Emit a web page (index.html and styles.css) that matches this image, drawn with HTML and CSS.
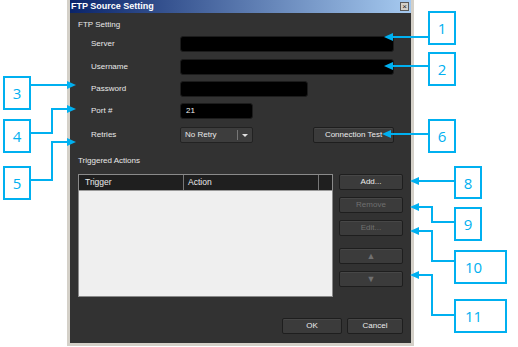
FILE: index.html
```html
<!DOCTYPE html>
<html lang="en">
<head>
    <meta charset="UTF-8">
    <title>FTP Source Setting</title>
    <link rel="stylesheet" href="styles.css">
</head>
<body>
    <div class="dialog">
        <div class="titlebar">
            <span class="title">FTP Source Setting</span>
            <span class="close">×</span>
        </div>

        <div class="content">
            <div class="group-label">FTP Setting</div>

            <div class="form">
                <label>Server</label>
                <div class="field field-wide"></div>

                <label>Username</label>
                <div class="field field-wide"></div>

                <label>Password</label>
                <div class="field field-mid"></div>

                <label>Port #</label>
                <div class="field field-short">21</div>

                <label>Retries</label>
                <div class="retry-row">
                    <div class="select">
                        <span class="select-text">No Retry</span>
                        <span class="select-arrow"></span>
                    </div>
                    <button class="btn btn-test">Connection Test</button>
                </div>
            </div>

            <div class="group-label group-triggered">Triggered Actions</div>

            <div class="actions">
                <div class="table">
                    <div class="thead">
                        <div class="th th-trigger">Trigger</div>
                        <div class="th th-action">Action</div>
                        <div class="th th-pad"></div>
                    </div>
                    <div class="tbody"></div>
                </div>
                <div class="side-buttons">
                    <button class="btn">Add...</button>
                    <button class="btn disabled">Remove</button>
                    <button class="btn disabled">Edit...</button>
                    <button class="btn disabled btn-move spaced">▲</button>
                    <button class="btn disabled btn-move">▼</button>
                </div>
            </div>

            <div class="footer">
                <button class="btn btn-ok">OK</button>
                <button class="btn btn-cancel">Cancel</button>
            </div>
        </div>
    </div>

    <!-- callout arrows -->
    <svg class="callouts" width="518" height="347" viewBox="0 0 518 347">
        <g fill="none" stroke="#00b0f0" stroke-width="2">
            <path d="M428 37 H392"/>
            <path d="M428 66 H392"/>
            <path d="M428 134 H390"/>
            <path d="M454 181 H418"/>
            <path d="M454 222 H432 V207 H418"/>
            <path d="M454 261 H432 V231 H418"/>
            <path d="M454 315 H432 V275 H418"/>
            <path d="M30 85 H68"/>
            <path d="M30 133 H52 V109 H68"/>
            <path d="M30 180 H52 V142 H68"/>
        </g>
        <g fill="#00b0f0">
            <polygon points="384,37 393,33 393,41"/>
            <polygon points="384,66 393,62 393,70"/>
            <polygon points="382,134 391,130 391,138"/>
            <polygon points="410,181 419,177 419,185"/>
            <polygon points="410,207 419,203 419,211"/>
            <polygon points="410,231 419,227 419,235"/>
            <polygon points="410,275 419,271 419,279"/>
            <polygon points="76,85 67,81 67,89"/>
            <polygon points="76,109 67,105 67,113"/>
            <polygon points="76,142 67,138 67,146"/>
        </g>
    </svg>

    <div class="tag tag-1">1</div>
    <div class="tag tag-2">2</div>
    <div class="tag tag-3">3</div>
    <div class="tag tag-4">4</div>
    <div class="tag tag-5">5</div>
    <div class="tag tag-6">6</div>
    <div class="tag tag-8">8</div>
    <div class="tag tag-9">9</div>
    <div class="tag tag-wide tag-10">10</div>
    <div class="tag tag-wide tag-11">11</div>
</body>
</html>
```

FILE: styles.css
```css
body {
    margin: 0;
    width: 518px;
    height: 347px;
    background: #fff;
    position: relative;
    overflow: hidden;
    font-family: "Liberation Sans", Arial, sans-serif;
}

.dialog {
    box-sizing: border-box;
    margin-left: 67px;
    width: 347px;
    height: 346px;
    border: 3px solid #d4d0c8;
    border-top: 0;
    box-shadow: inset 1px 0 0 #9a9a9a, inset -1px -1px 0 #9a9a9a;
    display: flex;
    flex-direction: column;
}

.titlebar {
    height: 13px;
    background: linear-gradient(to right, #0a246a, #a6caf0);
    display: flex;
    align-items: center;
    justify-content: space-between;
    padding: 0 2px 0 1px;
}

.title {
    color: #fff;
    font-weight: bold;
    font-size: 9px;
    line-height: 13px;
}

.close {
    width: 7px;
    height: 7px;
    background: #d4d0c8;
    border: 1px solid #5a5a5a;
    color: #222;
    font-size: 8px;
    line-height: 7px;
    text-align: center;
}

.content {
    flex: 1;
    background: #323232;
    padding: 0 8px;
    display: flex;
    flex-direction: column;
    color: #e9e9e9;
    font-size: 8px;
}

.group-label {
    line-height: 12px;
    margin-top: 6px;
    margin-bottom: 5px;
}

.group-triggered {
    margin-top: 12px;
    margin-bottom: 7px;
}

.form {
    display: grid;
    grid-template-columns: 89px 214px;
    grid-template-rows: 23px 22px 22px 24px 16px;
    padding-left: 13px;
    align-items: start;
}

.form label {
    line-height: 16px;
}

.field {
    height: 16px;
    box-sizing: border-box;
    background: #000;
    border: 1px solid #1c1c1c;
    border-radius: 3px;
    padding-left: 5px;
    line-height: 14px;
    color: #f0f0f0;
}

.field-wide { width: 214px; }
.field-mid { width: 128px; }
.field-short { width: 73px; }

.retry-row {
    display: flex;
    justify-content: space-between;
    height: 16px;
}

.select {
    width: 73px;
    height: 16px;
    box-sizing: border-box;
    background: #3d3d3d;
    border: 1px solid #222;
    border-radius: 2px;
    display: flex;
}

.select-text {
    flex: 1;
    padding-left: 4px;
    border-right: 1px solid #777;
    margin: 2px 0;
    line-height: 10px;
}

.select-arrow {
    width: 14px;
    position: relative;
}

.select-arrow::after {
    content: "";
    position: absolute;
    left: 4px;
    top: 6px;
    border-left: 3px solid transparent;
    border-right: 3px solid transparent;
    border-top: 3px solid #e0e0e0;
}

.btn {
    height: 16px;
    box-sizing: border-box;
    background: #3b3b3b;
    border: 1px solid #1e1e1e;
    border-radius: 2px;
    box-shadow: inset 0 1px 0 #474747;
    color: #ececec;
    font-family: "Liberation Sans", Arial, sans-serif;
    font-size: 8px;
    line-height: 14px;
    padding: 0;
    text-align: center;
}

.btn.disabled {
    color: #707070;
}

.btn-test { width: 81px; }

.actions {
    display: flex;
    gap: 6px;
    height: 123px;
}

.table {
    width: 255px;
    box-sizing: border-box;
    border: 1px solid #8a8a8a;
    display: flex;
    flex-direction: column;
}

.thead {
    height: 15px;
    background: #1f1f1f;
    display: flex;
    border-bottom: 1px solid #9a9a9a;
}

.th {
    line-height: 15px;
    padding-left: 6px;
    color: #ececec;
    font-size: 8.5px;
}

.th-trigger {
    width: 98px;
    border-right: 1px solid #777;
}

.th-action {
    flex: 1;
    padding-left: 4px;
    border-right: 1px solid #777;
}

.th-pad {
    width: 13px;
    padding: 0;
}

.tbody {
    flex: 1;
    background: #efefef;
}

.side-buttons {
    width: 64px;
    display: flex;
    flex-direction: column;
    gap: 7px;
}

.btn-move {
    font-size: 9px;
}

.spaced {
    margin-top: 5px;
}

.footer {
    margin-top: 21px;
    display: flex;
    justify-content: flex-end;
    gap: 5px;
}

.btn-ok { width: 60px; }
.btn-cancel { width: 56px; }

/* callouts */
.callouts {
    position: absolute;
    left: 0;
    top: 0;
    pointer-events: none;
}

.tag {
    position: absolute;
    box-sizing: border-box;
    width: 28px;
    height: 34px;
    border: 2px solid #00b0f0;
    background: #fff;
    color: #00b0f0;
    font-family: "Open Sans", sans-serif;
    font-size: 15px;
    line-height: 30px;
    text-align: center;
}

.tag-wide {
    width: 53px;
    text-align: left;
    padding-left: 9px;
}

.tag-1 { left: 428px; top: 11px; }
.tag-2 { left: 428px; top: 52px; }
.tag-6 { left: 428px; top: 119px; }
.tag-3 { left: 3px; top: 76px; }
.tag-4 { left: 3px; top: 119px; }
.tag-5 { left: 3px; top: 166px; }
.tag-8 { left: 454px; top: 166px; height: 33px; }
.tag-9 { left: 454px; top: 207px; }
.tag-10 { left: 454px; top: 250px; }
.tag-11 { left: 454px; top: 299px; }
```
